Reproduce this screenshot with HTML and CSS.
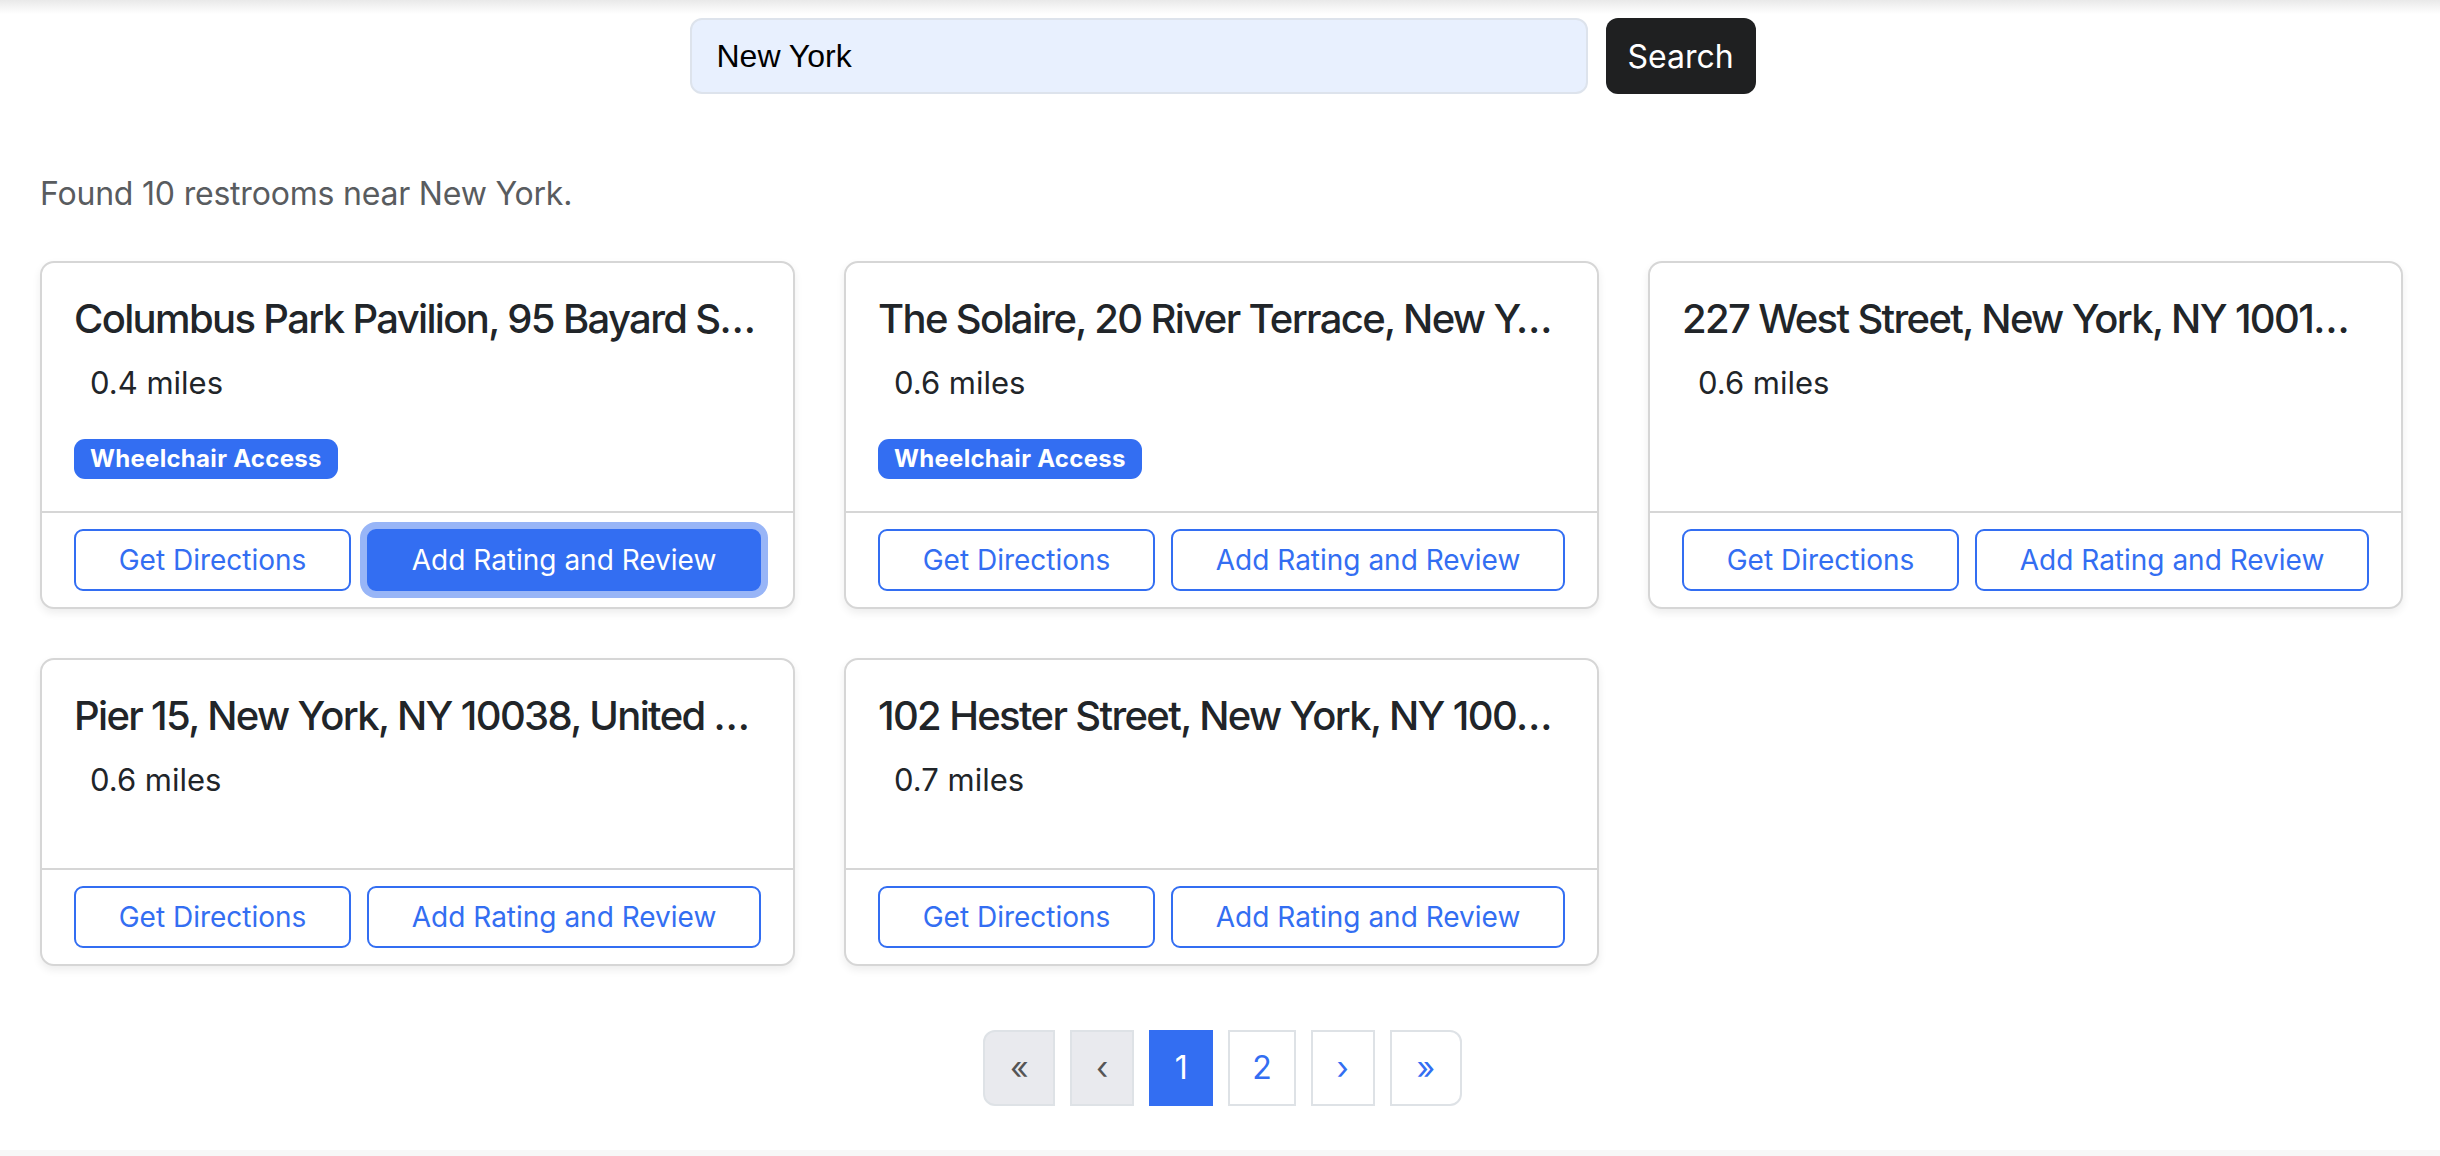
FILE: index.html
```html
<!DOCTYPE html>
<html lang="en">
<head>
<meta charset="utf-8">
<title>Restroom Finder</title>
<link rel="stylesheet" href="styles.css">
</head>
<body>
<div class="top-shade"></div>
<main class="page">
  <form class="search-bar">
    <input class="search-input" type="text" value="New York">
    <button class="search-btn" type="button">Search</button>
  </form>

  <p class="found">Found 10 restrooms near New York.</p>

  <div class="results">
    <div class="card">
      <div class="card-body">
        <h5 class="card-title">Columbus Park Pavilion, 95 Bayard Street, New York, NY 10013, United States</h5>
        <p class="dist">0.4 miles</p>
        <span class="badge">Wheelchair Access</span>
      </div>
      <div class="card-footer">
        <button class="btn" type="button">Get Directions</button>
        <button class="btn btn-focus" type="button">Add Rating and Review</button>
      </div>
    </div>

    <div class="card">
      <div class="card-body">
        <h5 class="card-title">The Solaire, 20 River Terrace, New York, NY 10282, United States</h5>
        <p class="dist">0.6 miles</p>
        <span class="badge">Wheelchair Access</span>
      </div>
      <div class="card-footer">
        <button class="btn" type="button">Get Directions</button>
        <button class="btn" type="button">Add Rating and Review</button>
      </div>
    </div>

    <div class="card">
      <div class="card-body">
        <h5 class="card-title">227 West Street, New York, NY 10013, United States</h5>
        <p class="dist">0.6 miles</p>
      </div>
      <div class="card-footer">
        <button class="btn" type="button">Get Directions</button>
        <button class="btn" type="button">Add Rating and Review</button>
      </div>
    </div>

    <div class="card">
      <div class="card-body">
        <h5 class="card-title">Pier 15, New York, NY 10038, United States</h5>
        <p class="dist">0.6 miles</p>
      </div>
      <div class="card-footer">
        <button class="btn" type="button">Get Directions</button>
        <button class="btn" type="button">Add Rating and Review</button>
      </div>
    </div>

    <div class="card">
      <div class="card-body">
        <h5 class="card-title">102 Hester Street, New York, NY 10002, United States</h5>
        <p class="dist">0.7 miles</p>
      </div>
      <div class="card-footer">
        <button class="btn" type="button">Get Directions</button>
        <button class="btn" type="button">Add Rating and Review</button>
      </div>
    </div>
  </div>

  <nav class="pager">
    <ul class="pagination">
      <li class="page-item disabled first"><span class="page-link">&laquo;</span></li>
      <li class="page-item disabled"><span class="page-link">&lsaquo;</span></li>
      <li class="page-item active"><span class="page-link">1</span></li>
      <li class="page-item"><span class="page-link">2</span></li>
      <li class="page-item"><span class="page-link">&rsaquo;</span></li>
      <li class="page-item last"><span class="page-link">&raquo;</span></li>
    </ul>
  </nav>
</main>
<footer class="footer"></footer>
</body>
</html>
```
FILE: styles.css
```css
* { box-sizing: border-box; }

html, body {
  margin: 0;
  padding: 0;
  background: #fff;
}

body {
  font-family: Inter, "Noto Sans", "Liberation Sans", sans-serif;
  color: #212529;
  height: 1156px;
  overflow: hidden;
  position: relative;
}

.top-shade {
  position: absolute;
  top: 0;
  left: 0;
  right: 0;
  height: 14px;
  background: linear-gradient(to bottom, #e9e9e9 0%, rgba(255,255,255,0) 100%);
  pointer-events: none;
}

.page {
  padding: 18px 37px 0 40px;
}

.search-bar {
  display: flex;
  justify-content: center;
  gap: 18px;
  margin: 0;
  padding-left: 2px;
}

.search-input {
  width: 898px;
  height: 76px;
  border: 2px solid #dde3ec;
  border-radius: 12px;
  background: #e8f0fe;
  font-family: "Liberation Sans", Arial, sans-serif;
  font-size: 32px;
  color: #000;
  padding: 0 25px;
  outline: none;
}

.search-btn {
  width: 150px;
  height: 76px;
  border: none;
  border-radius: 12px;
  background: #1f2021;
  color: #fff;
  font-family: Inter, "Liberation Sans", sans-serif;
  font-size: 32px;
  padding: 0;
}

.found {
  margin: 76px 0 43px 0;
  font-size: 32px;
  line-height: 48px;
  color: #595c5f;
  letter-spacing: -0.2px;
}

.results {
  display: grid;
  grid-template-columns: repeat(3, 1fr);
  column-gap: 49px;
  row-gap: 49px;
}

.card {
  display: flex;
  flex-direction: column;
  border: 2px solid #d6d6d6;
  border-radius: 14px;
  background: #fff;
  box-shadow: 0 4px 8px rgba(0,0,0,0.075);
  min-width: 0;
}

.card-body {
  flex: 1 1 auto;
  padding: 32px;
  min-width: 0;
}

.card-title {
  margin: 0 0 16px 0;
  font-size: 40px;
  font-weight: 500;
  line-height: 48px;
  white-space: nowrap;
  overflow: hidden;
  text-overflow: ellipsis;
  letter-spacing: -1.65px;
}

.dist {
  margin: 0 0 32px 0;
  padding-left: 16px;
  font-size: 31px;
  line-height: 48px;
}

.badge {
  display: inline-block;
  background: #336ef2;
  color: #fff;
  font-size: 24px;
  font-weight: 700;
  line-height: 24px;
  letter-spacing: 0.3px;
  padding: 8px 16px;
  border-radius: 11px;
}

.card-footer {
  display: flex;
  gap: 16px;
  padding: 16px 32px;
  border-top: 2px solid #d6d6d6;
}

.btn {
  flex: 1 1 auto;
  height: 62px;
  border: 2px solid #336ef2;
  border-radius: 9px;
  background: #fff;
  color: #336ef2;
  font-family: Inter, "Liberation Sans", sans-serif;
  font-size: 28px;
  padding: 0 22px;
  white-space: nowrap;
}

.btn-focus {
  background: #336ef2;
  color: #fff;
  box-shadow: 0 0 0 7px #98b5f7;
}

.pager {
  display: flex;
  justify-content: center;
  margin-top: 64px;
}

.pagination {
  display: flex;
  gap: 15px;
  list-style: none;
  margin: 0;
  padding: 0 0 0 2px;
}

.page-link {
  display: block;
  height: 76px;
  min-width: 64px;
  padding: 0 22px;
  border: 2px solid #dee2e6;
  background: #fff;
  color: #336ef2;
  font-size: 32px;
  line-height: 72px;
  text-align: center;
}

.disabled .page-link {
  background: #e9eaee;
  color: #555;
}

.active .page-link {
  background: #336ef2;
  border-color: #336ef2;
  color: #fff;
}

.first .page-link { border-radius: 12px 0 0 12px; min-width: 72px; }
.last .page-link { border-radius: 0 12px 12px 0; min-width: 72px; }

.footer {
  position: absolute;
  left: 0;
  right: 0;
  top: 1150px;
  height: 6px;
  background: #f7f7f7;
}
```
